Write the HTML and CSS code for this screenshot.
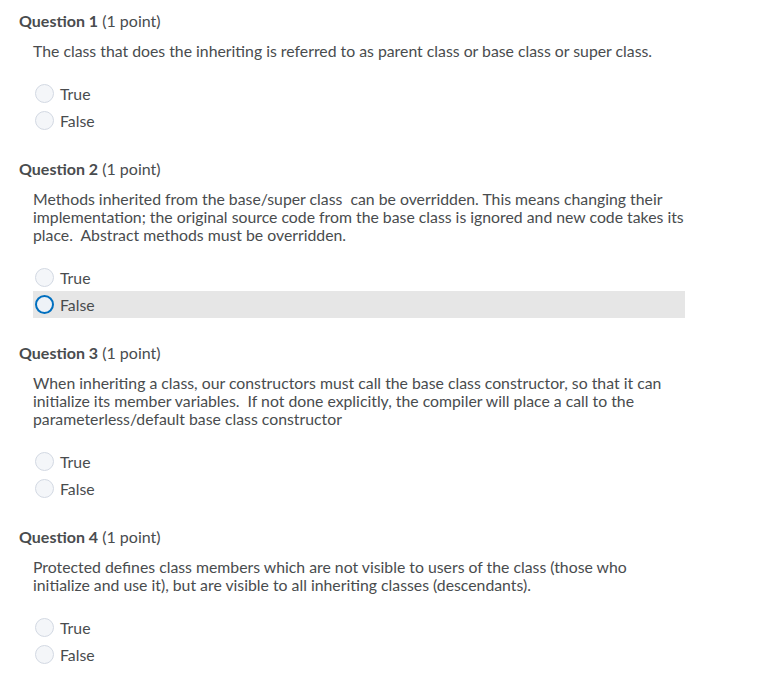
FILE: index.html
```html
<!DOCTYPE html>
<html>
<head>
<meta charset="utf-8">
<link rel="stylesheet" href="styles.css">
</head>
<body>
<div class="page">
  <section class="question">
    <h2 class="q-title"><strong>Question 1</strong> (1 point)</h2>
    <p class="q-text">The class that does the inheriting is referred to as parent class or base class or super class.</p>
    <ul class="options">
      <li class="option"><span class="radio"></span><span class="label">True</span></li>
      <li class="option"><span class="radio"></span><span class="label">False</span></li>
    </ul>
  </section>
  <section class="question">
    <h2 class="q-title"><strong>Question 2</strong> (1 point)</h2>
    <p class="q-text">Methods inherited from the base/super class&nbsp; can be overridden. This means changing their implementation; the original source code from the base class is ignored and new code takes its place.&nbsp; Abstract methods must be overridden.</p>
    <ul class="options">
      <li class="option"><span class="radio"></span><span class="label">True</span></li>
      <li class="option hover"><span class="radio focus"></span><span class="label">False</span></li>
    </ul>
  </section>
  <section class="question">
    <h2 class="q-title"><strong>Question 3</strong> (1 point)</h2>
    <p class="q-text">When inheriting a class, our constructors must call the base class constructor, so that it can initialize its member variables.&nbsp; If not done explicitly, the compiler will place a call to the parameterless/default base class constructor</p>
    <ul class="options">
      <li class="option"><span class="radio"></span><span class="label">True</span></li>
      <li class="option"><span class="radio"></span><span class="label">False</span></li>
    </ul>
  </section>
  <section class="question">
    <h2 class="q-title"><strong>Question 4</strong> (1 point)</h2>
    <p class="q-text">Protected defines class members which are not visible to users of the class (those who initialize and use it), but are visible to all inheriting classes (descendants).</p>
    <ul class="options">
      <li class="option"><span class="radio"></span><span class="label">True</span></li>
      <li class="option"><span class="radio"></span><span class="label">False</span></li>
    </ul>
  </section>
</div>
</body>
</html>
```
FILE: styles.css
```css
html, body {
  margin: 0;
  padding: 0;
  background: #ffffff;
}
.page {
  font-family: Lato, "Open Sans", sans-serif;
  color: #494c4e;
  padding: 11px 0 0 19px;
  width: 666px;
}
.question {
  margin-bottom: 25px;
}
.q-title {
  margin: 0;
  font-size: 16px;
  line-height: 20px;
  font-weight: 400;
}
.q-title strong {
  font-weight: 700;
}
.q-text {
  margin: 11px 0 0 14px;
  font-size: 15.8px;
  line-height: 18px;
  width: 652px;
}
.options {
  list-style: none;
  margin: 20px 0 0 14px;
  padding: 0;
  width: 652px;
}
.option {
  display: flex;
  align-items: center;
  height: 27px;
  padding-left: 2px;
  font-size: 15.8px;
}
.option.hover {
  background: #e6e6e6;
}
.radio {
  box-sizing: border-box;
  width: 19px;
  height: 19px;
  border-radius: 50%;
  border: 1px solid #d3d9e3;
  background: #f4f6f9;
  margin-right: 6px;
  flex: none;
}
.radio.focus {
  border: 2px solid #006fbf;
  background: #eef2f7;
}
.label {
  line-height: 18px;
}
```
